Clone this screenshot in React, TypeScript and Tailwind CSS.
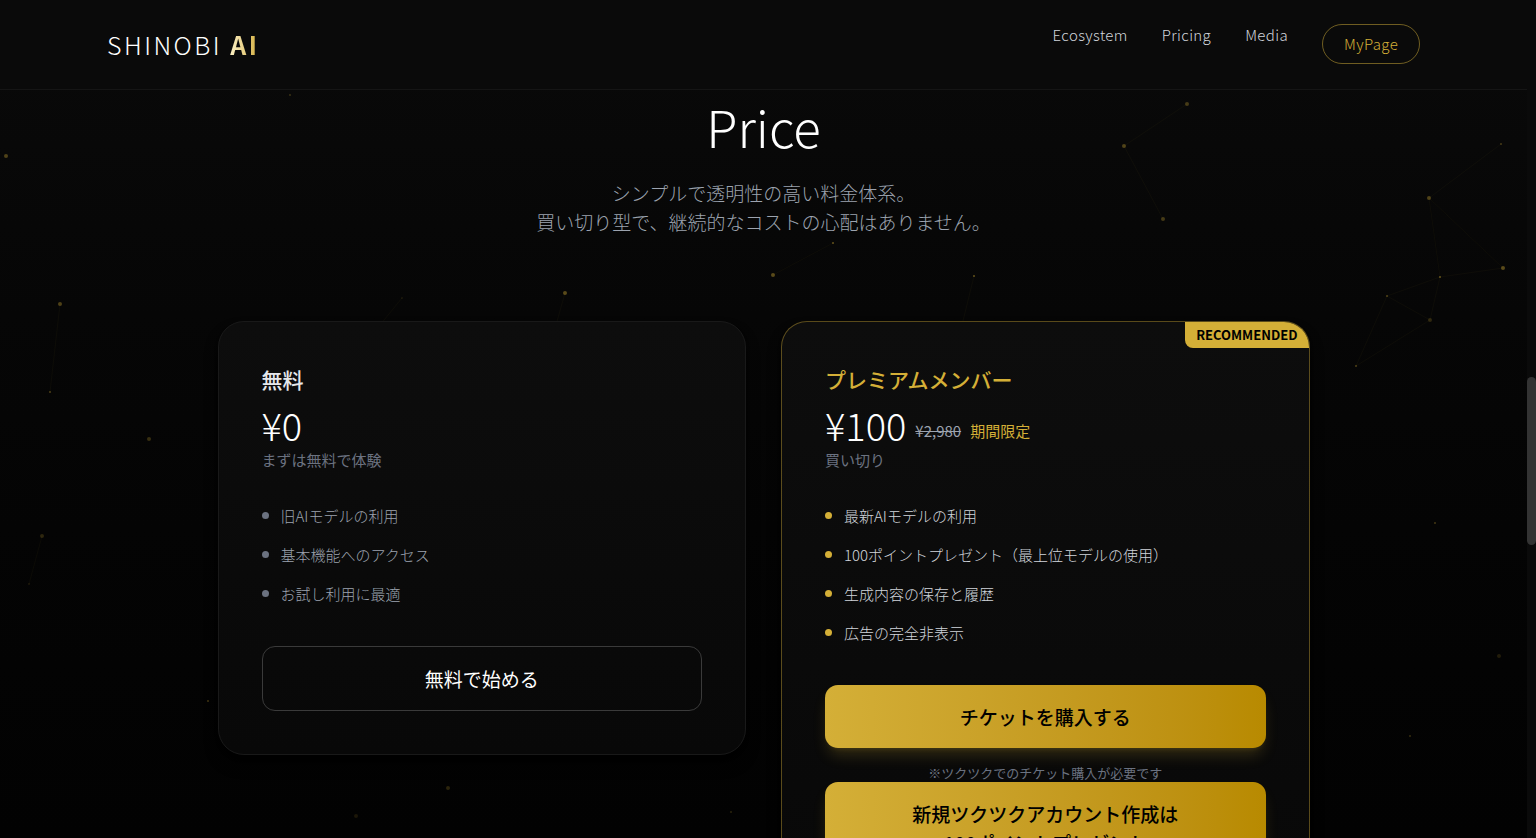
import clsx from 'clsx';

const navigationItems = [
  { href: '#ecosystem', label: 'Ecosystem' },
  { href: '#pricing', label: 'Pricing' },
  { href: '#media', label: 'Media' },
];

const freeFeatures = ['旧AIモデルの利用', '基本機能へのアクセス', 'お試し利用に最適'];

const premiumFeatures = [
  '最新AIモデルの利用',
  '100ポイントプレゼント（最上位モデルの使用）',
  '生成内容の保存と履歴',
  '広告の完全非表示',
];

// x, y, radius, opacity
const particles = [
  [290, 95, 1, 0.25],
  [6, 156, 2, 0.35],
  [60, 304, 2, 0.35],
  [50, 392, 1, 0.35],
  [149, 439, 2, 0.25],
  [42, 536, 2, 0.2],
  [29, 584, 1, 0.12],
  [208, 701, 1, 0.3],
  [448, 788, 2, 0.2],
  [356, 816, 2, 0.12],
  [731, 812, 1, 0.2],
  [565, 293, 2, 0.4],
  [773, 275, 2, 0.4],
  [833, 243, 1, 0.45],
  [974, 276, 1, 0.45],
  [402, 298, 1, 0.1],
  [1124, 146, 2, 0.35],
  [1187, 104, 2, 0.3],
  [1163, 219, 2, 0.3],
  [1429, 198, 2, 0.35],
  [1501, 144, 1, 0.3],
  [1503, 268, 2, 0.4],
  [1440, 277, 1, 0.45],
  [1387, 296, 1, 0.35],
  [1430, 320, 2, 0.2],
  [1356, 366, 1, 0.35],
  [1435, 523, 1, 0.3],
  [1499, 656, 2, 0.15],
  [1410, 736, 1, 0.25],
];

// x1, y1, x2, y2
const connections = [
  [1124, 146, 1187, 104],
  [1124, 146, 1163, 219],
  [1429, 198, 1501, 144],
  [1429, 198, 1440, 277],
  [1429, 198, 1503, 268],
  [1440, 277, 1503, 268],
  [1440, 277, 1387, 296],
  [1440, 277, 1430, 320],
  [1387, 296, 1430, 320],
  [1387, 296, 1356, 366],
  [1430, 320, 1356, 366],
  [773, 275, 833, 243],
  [565, 293, 556, 325],
  [974, 276, 962, 325],
  [402, 298, 380, 325],
  [60, 304, 50, 392],
  [42, 536, 29, 584],
];

function ParticleBackground() {
  return (
    <svg
      className="pointer-events-none absolute inset-0 h-full w-full"
      viewBox="0 0 1527 838"
      preserveAspectRatio="xMidYMid slice"
      aria-hidden="true"
    >
      {connections.map(([x1, y1, x2, y2], i) => (
        <line key={i} x1={x1} y1={y1} x2={x2} y2={y2} stroke="#d4af37" strokeOpacity={0.04} />
      ))}
      {particles.map(([cx, cy, r, opacity], i) => (
        <circle key={i} cx={cx} cy={cy} r={r} fill="#d4af37" fillOpacity={opacity} />
      ))}
    </svg>
  );
}

function Header() {
  return (
    <header className="relative z-20 border-b border-[#151515] bg-[#0a0a0a]">
      <nav className="mx-auto flex w-[86%] items-start justify-between pt-6 pb-[25px]" aria-label="Top">
        <a href="#top" className="text-[25px] leading-10 font-light tracking-widest text-white">
          SHINOBI{' '}
          <span className="bg-linear-to-r from-[#fbf0c4] to-[#d4af37] bg-clip-text font-bold text-transparent">AI</span>
        </a>
        <div className="flex items-start gap-[34px] text-[15px] leading-[22px] font-light tracking-wide text-[#d1d5db]">
          {navigationItems.map((item) => (
            <a key={item.href} href={item.href} className="hover:text-white">
              {item.label}
            </a>
          ))}
          <a
            href="#mypage"
            className="rounded-full border border-[#d4af37]/50 px-[21px] py-2 text-[#d4af37]"
          >
            MyPage
          </a>
        </div>
      </nav>
    </header>
  );
}

function FeatureList({ items, premium = false }: { items: string[]; premium?: boolean }) {
  return (
    <ul className="mt-8 flex flex-col gap-4">
      {items.map((item) => (
        <li
          key={item}
          className={clsx(
            'flex items-center gap-3 text-[15px] leading-[23px] font-light',
            premium ? 'text-[#d1d5db]' : 'text-[#9ca3af]'
          )}
        >
          <span className={clsx('size-[7px] shrink-0 rounded-full', premium ? 'bg-[#d4af37]' : 'bg-[#6b7280]')} />
          {item}
        </li>
      ))}
    </ul>
  );
}

function FreeCard() {
  return (
    <article className="rounded-[26px] border border-[#191919] bg-linear-to-b from-[#0d0d0d] to-[#080808] p-[43px] shadow-lg shadow-black">
      <h3 className="text-[21px] leading-7 font-medium text-[#e5e7eb]">無料</h3>
      <p className="mt-[9px] text-[38px] leading-[46px] font-extralight text-white">¥0</p>
      <p className="text-[15px] leading-6 text-[#6b7280]">まずは無料で体験</p>
      <FeatureList items={freeFeatures} />
      <button
        type="button"
        className="mt-[41px] w-full rounded-[13px] border border-[#3a3a3a] py-[17px] text-[19px] leading-[29px] text-white"
      >
        無料で始める
      </button>
    </article>
  );
}

function PremiumCard() {
  return (
    <article className="relative overflow-hidden rounded-[26px] border border-[#d4af37]/40 bg-linear-to-b from-[#0d0d0d] to-[#080808] p-[43px] shadow-lg shadow-black">
      <span className="absolute top-0 right-0 rounded-bl-lg bg-[#d4af37] px-[11px] py-1 text-[13px] leading-[18px] font-bold text-black">
        RECOMMENDED
      </span>
      <h3 className="text-[21px] leading-7 font-medium text-[#d4af37]">プレミアムメンバー</h3>
      <p className="mt-[9px] flex items-end gap-[9px] text-[15px] leading-[22px]">
        <span className="text-[38px] leading-[46px] font-extralight text-white">¥100</span>
        <s className="pb-[6px] text-[#9ca3af]">¥2,980</s>
        <span className="pb-[6px] text-[#d4af37]">期間限定</span>
      </p>
      <p className="text-[15px] leading-6 text-[#6b7280]">買い切り</p>
      <FeatureList items={premiumFeatures} premium />
      <button
        type="button"
        className="mt-[41px] w-full rounded-[13px] bg-linear-to-r from-[#d4af37] to-[#b88a00] py-[17px] text-[19px] leading-[29px] font-medium text-black shadow-lg shadow-[#d4af37]/20"
      >
        チケットを購入する
      </button>
      <p className="mt-4 text-center text-[13px] leading-[18px] text-[#6b7280]">
        ※ツクツクでのチケット購入が必要です
      </p>
      <button
        type="button"
        className="w-full rounded-[13px] bg-linear-to-r from-[#d4af37] to-[#b88a00] py-[17px] text-[19px] leading-[29px] font-medium text-black shadow-lg shadow-[#d4af37]/20"
      >
        新規ツクツクアカウント作成は
        <br />
        100ポイントプレゼント
      </button>
    </article>
  );
}

function ScrollTrack() {
  return (
    <div className="flex w-[9px] shrink-0 flex-col bg-[#0a0a0a]" aria-hidden="true">
      <div className="h-[45%] shrink-0" />
      <div className="h-[20%] shrink-0 rounded-full bg-[#333333]" />
    </div>
  );
}

export default function App() {
  return (
    <div className="flex h-screen overflow-hidden bg-black font-['Noto_Sans_CJK_JP',sans-serif]">
      <div className="relative min-w-0 flex-1 overflow-hidden bg-linear-to-b from-[#0a0a0a] to-[#020202]">
        <ParticleBackground />
        <Header />
        <main id="pricing" className="relative">
          <div className="text-center font-light">
            <h2 className="text-[51px] leading-[72px] text-white">Price</h2>
            <p className="mt-4 text-[19px] leading-[29px] text-[#9ca3af]">
              シンプルで透明性の高い料金体系。
              <br />
              買い切り型で、継続的なコストの心配はありません。
            </p>
          </div>
          <div className="mx-auto mt-[85px] grid w-full max-w-[1092px] grid-cols-2 items-start gap-[35px]">
            <FreeCard />
            <PremiumCard />
          </div>
        </main>
      </div>
      <ScrollTrack />
    </div>
  );
}
